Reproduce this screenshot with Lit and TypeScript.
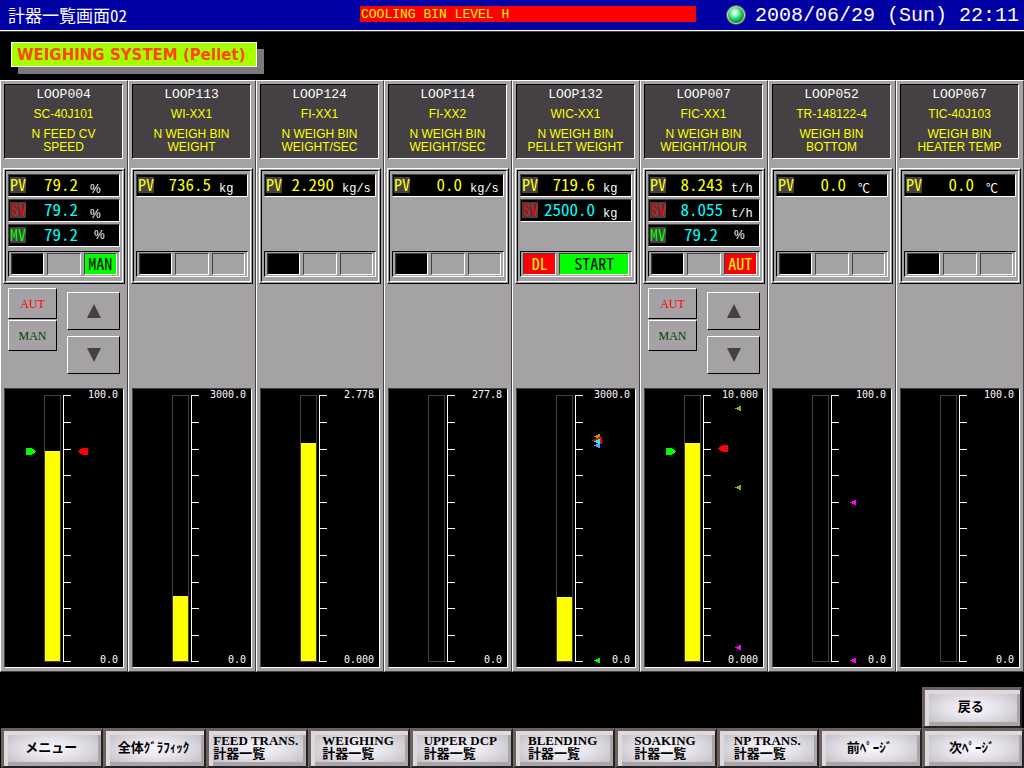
import { LitElement, html, css, svg, nothing } from "lit";
import { customElement, property } from "lit/decorators.js";
import { classMap } from "lit/directives/class-map.js";

interface Reading {
  tag: "PV" | "SV" | "MV";
  value: string;
  unit: string;
  shifted?: boolean;
  far?: boolean;
  level?: boolean;
}
interface Lamp {
  text?: string;
  look: "off" | "blank" | "green" | "red" | "start";
}
interface Marker {
  kind: "right" | "left" | "tri" | "small";
  x: number;
  y: number;
  color: string;
}
interface Loop {
  id: string;
  tag: string;
  name: string[];
  readings: Reading[];
  lamps?: Lamp[];
  controls?: boolean;
  max: string;
  min: string;
  fillTop?: number;
  markers?: Marker[];
}

const IDLE: Lamp[] = [{ look: "off" }, { look: "blank" }, { look: "blank" }];
const OLIVE = "#a5a200";

const LOOPS: Loop[] = [
  {
    id: "LOOP004", tag: "SC-40J101", name: ["N FEED CV", "SPEED"],
    readings: [
      { tag: "PV", value: "79.2", unit: "%", far: true },
      { tag: "SV", value: "79.2", unit: "%", far: true },
      { tag: "MV", value: "79.2", unit: "%", far: true, level: true },
    ],
    lamps: [{ look: "off" }, { look: "blank" }, { look: "green", text: "MAN" }],
    controls: true, max: "100.0", min: "0.0", fillTop: 62,
    markers: [
      { kind: "right", x: 21, y: 59, color: "#00ff00" },
      { kind: "left", x: 73, y: 59, color: "#ff0000" },
    ],
  },
  {
    id: "LOOP113", tag: "WI-XX1", name: ["N WEIGH BIN", "WEIGHT"],
    readings: [{ tag: "PV", value: "736.5", unit: "kg", shifted: true }],
    max: "3000.0", min: "0.0", fillTop: 207,
  },
  {
    id: "LOOP124", tag: "FI-XX1", name: ["N WEIGH BIN", "WEIGHT/SEC"],
    readings: [{ tag: "PV", value: "2.290", unit: "kg/s" }],
    max: "2.778", min: "0.000", fillTop: 54,
  },
  {
    id: "LOOP114", tag: "FI-XX2", name: ["N WEIGH BIN", "WEIGHT/SEC"],
    readings: [{ tag: "PV", value: "0.0", unit: "kg/s" }],
    max: "277.8", min: "0.0",
  },
  {
    id: "LOOP132", tag: "WIC-XX1", name: ["N WEIGH BIN", "PELLET WEIGHT"],
    readings: [
      { tag: "PV", value: "719.6", unit: "kg", shifted: true },
      { tag: "SV", value: "2500.0", unit: "kg", shifted: true },
    ],
    lamps: [{ look: "red", text: "DL" }, { look: "start", text: "START" }],
    max: "3000.0", min: "0.0", fillTop: 208,
    markers: [
      { kind: "small", x: 77, y: 45, color: OLIVE },
      { kind: "tri", x: 75, y: 48, color: "#ff0000" },
      { kind: "small", x: 77, y: 54, color: "#5aa2ff" },
      { kind: "small", x: 77, y: 50, color: "#00ffff" },
      { kind: "small", x: 77, y: 269, color: "#00ff00" },
    ],
  },
  {
    id: "LOOP007", tag: "FIC-XX1", name: ["N WEIGH BIN", "WEIGHT/HOUR"],
    readings: [
      { tag: "PV", value: "8.243", unit: "t/h", shifted: true },
      { tag: "SV", value: "8.055", unit: "t/h", shifted: true },
      { tag: "MV", value: "79.2", unit: "%", far: true, level: true },
    ],
    lamps: [{ look: "off" }, { look: "blank" }, { look: "red", text: "AUT" }],
    controls: true, max: "10.000", min: "0.000", fillTop: 54,
    markers: [
      { kind: "right", x: 21, y: 59, color: "#00ff00" },
      { kind: "left", x: 73, y: 56, color: "#ff0000" },
      { kind: "small", x: 90, y: 17, color: OLIVE },
      { kind: "small", x: 90, y: 96, color: OLIVE },
      { kind: "small", x: 90, y: 256, color: "#ff00ff" },
    ],
  },
  {
    id: "LOOP052", tag: "TR-148122-4", name: ["WEIGH BIN", "BOTTOM"],
    readings: [{ tag: "PV", value: "0.0", unit: "℃", far: true }],
    max: "100.0", min: "0.0",
    markers: [
      { kind: "small", x: 77, y: 111, color: "#ff00ff" },
      { kind: "small", x: 77, y: 269, color: "#ff00ff" },
    ],
  },
  {
    id: "LOOP067", tag: "TIC-40J103", name: ["WEIGH BIN", "HEATER TEMP"],
    readings: [{ tag: "PV", value: "0.0", unit: "℃", far: true }],
    max: "100.0", min: "0.0",
  },
];

const SCREENS: string[][] = [
  ["メニュー"],
  ["全体ｸﾞﾗﾌｨｯｸ"],
  ["FEED TRANS.", "計器一覧"],
  ["WEIGHING", "計器一覧"],
  ["UPPER DCP", "計器一覧"],
  ["BLENDING", "計器一覧"],
  ["SOAKING", "計器一覧"],
  ["NP TRANS.", "計器一覧"],
  ["前ﾍﾟｰｼﾞ"],
  ["次ﾍﾟｰｼﾞ"],
];

const MARKER_PATHS: Record<Marker["kind"], string> = {
  right: "M0 0h6v1h2v1h1v1h1v1h-1v1h-1v1h-2v1h-6z",
  left: "M10 0h-6v1h-2v1h-1v1h-1v1h1v1h1v1h2v1h6z",
  tri: "M10 0h-4v1h-2v1h-2v1h-2v1h2v1h2v1h2v1h4z",
  small: "M6 0h-2v1h-2v1h-2v1h2v1h2v1h2z",
};

@customElement("loop-gauge")
class LoopGauge extends LitElement {
  @property({ attribute: false }) loop!: Loop;

  static styles = css`
    :host {
      display: grid;
      background: #000;
      border: 1px solid;
      border-color: #444044 #fff #fff #444044;
    }
    .plot,
    .limits {
      grid-area: 1 / 1;
    }
    .plot {
      display: block;
      justify-self: center;
      width: 118px;
      height: 278px;
      shape-rendering: crispEdges;
    }
    .limits {
      display: flex;
      flex-direction: column;
      justify-content: space-between;
      align-items: flex-end;
      padding: 0 5px 2px 0;
      color: #fff;
      font: 10px/11px "DejaVu Sans Mono", monospace;
    }
  `;

  render() {
    const { max, min, fillTop, markers = [] } = this.loop;
    const ticks = Array.from({ length: 11 }, (_, i) => Math.ceil(6 + 26.6 * i));
    return html`
      <svg class="plot" viewBox="0 0 118 278" aria-hidden="true">
        <path d="M39 6h17v267h-17zM40 7v265h15v-265z" fill="#444044" fill-rule="evenodd" />
        ${fillTop === undefined
          ? nothing
          : svg`<rect x="40" y=${fillTop} width="15" height=${272 - fillTop} fill="#ffff00" />`}
        <rect x="58" y="6" width="1" height="267" fill="#fff" />
        ${ticks.map((y) => svg`<rect x="58" y=${y} width="8" height="1" fill="#fff" />`)}
        ${markers.map(
          (m) => svg`<path transform="translate(${m.x} ${m.y})" d=${MARKER_PATHS[m.kind]} fill=${m.color} />`
        )}
      </svg>
      <div class="limits"><span>${max}</span><span>${min}</span></div>
    `;
  }
}

@customElement("loop-panel")
class LoopPanel extends LitElement {
  @property({ attribute: false }) loop!: Loop;

  static styles = css`
    :host {
      display: block;
      min-width: 0;
      box-sizing: border-box;
      padding: 3px 2px;
      background: #a5a2a5;
      border: 1px solid;
      border-color: #fff #444044 #444044 #fff;
    }
    .info {
      box-sizing: border-box;
      height: 75px;
      margin: 0 2px 9px 1px;
      padding-top: 3px;
      background: #444044;
      border: 1px solid;
      border-color: #000 #fff #fff #000;
      color: #ff0;
      text-align: center;
      font: 12px/13px "Liberation Sans", Arial, sans-serif;
      white-space: nowrap;
    }
    .id {
      margin: 0;
      color: #fff;
      font: 13px/14px "Liberation Mono", monospace;
    }
    .tag {
      margin: 6px 0 7px;
    }
    .name {
      margin: 0;
    }
    .frame {
      padding: 1px;
      border: 1px solid;
      border-color: #fff #000 #000 #fff;
    }
    .inner {
      display: grid;
      grid-template-rows: 73px 26px;
      gap: 4px;
      padding: 3px 2px 4px;
      border: 1px solid;
      border-color: #000 #fff #fff #000;
    }
    .readings {
      display: flex;
      flex-direction: column;
      gap: 2px;
    }
    .reading {
      display: flex;
      align-items: flex-start;
      box-sizing: border-box;
      height: 23px;
      padding-left: 1px;
      background: #000;
      border: 1px solid;
      border-color: #444044 #fff #fff #444044;
      font-family: "Noto Sans CJK JP", sans-serif;
      font-feature-settings: "hwid";
      white-space: nowrap;
    }
    .kind {
      width: 16px;
      height: 16px;
      margin-top: 2px;
      background: #444044;
      font-size: 16px;
      line-height: 14px;
      color: #ff0;
    }
    .kind.sv {
      color: #f00;
    }
    .kind.mv {
      color: #0f0;
    }
    .value {
      width: 52px;
      text-align: right;
      color: #0ff;
      font-size: 17px;
      line-height: 18px;
    }
    .value.pv {
      color: #ff0;
    }
    .value.shifted {
      width: 57px;
    }
    .unit {
      padding: 8px 0 0 8px;
      color: #fff;
      font: 12px/12px "Liberation Mono", monospace;
    }
    .unit.far {
      padding-left: 12px;
      font-family: "Liberation Sans", "Noto Sans CJK JP", sans-serif;
    }
    .unit.level {
      padding-top: 4px;
      padding-left: 16px;
    }
    .lamps {
      display: grid;
      grid-template-columns: repeat(3, 1fr);
      gap: 3px;
      padding: 1px 2px;
      border: 1px solid;
      border-color: #000 #fff #fff #000;
      font: 16px/18px "Noto Sans CJK JP", sans-serif;
      font-feature-settings: "hwid";
      text-align: center;
    }
    .lamp {
      border: 1px solid;
      border-color: #444044 #fff #fff #444044;
      white-space: nowrap;
    }
    .off {
      background: #000;
    }
    .green,
    .start {
      background: #0f0;
      color: #000;
    }
    .start {
      grid-column: span 2;
    }
    .red {
      background: #f00;
      color: #ff0;
    }
    .controls {
      display: flex;
      justify-content: space-between;
      box-sizing: border-box;
      height: 104px;
      padding: 4px 5px;
    }
    .modes,
    .steps {
      display: flex;
      flex-direction: column;
    }
    .modes {
      gap: 1px;
    }
    .steps {
      gap: 6px;
      padding-top: 4px;
    }
    button {
      display: grid;
      place-items: center;
      box-sizing: border-box;
      padding: 0;
      background: #a5a2a5;
      border: 1px solid;
      border-color: #fff #000 #000 #fff;
      border-radius: 0;
      font: 12px/14px "Liberation Serif", serif;
    }
    .mode {
      width: 49px;
      height: 31px;
    }
    .aut {
      color: #f00;
    }
    .man {
      color: #004400;
    }
    .step {
      width: 53px;
      height: 38px;
    }
    .arrow {
      display: block;
      width: 14px;
      height: 14px;
      fill: #444044;
    }
    loop-gauge {
      margin: 0 1px;
    }
  `;

  render() {
    const l = this.loop;
    return html`
      <header class="info">
        <h2 class="id">${l.id}</h2>
        <p class="tag">${l.tag}</p>
        <p class="name">${l.name[0]}<br />${l.name[1]}</p>
      </header>
      <div class="frame">
        <div class="inner">
          <div class="readings">
            ${l.readings.map((r) => {
              const kind = r.tag.toLowerCase();
              return html`<div class="reading">
                <span class="kind ${kind}">${r.tag}</span>
                <output class=${classMap({ value: true, [kind]: true, shifted: !!r.shifted })}>${r.value}</output>
                <span class=${classMap({ unit: true, far: !!r.far, level: !!r.level })}>${r.unit}</span>
              </div>`;
            })}
          </div>
          <div class="lamps">
            ${(l.lamps ?? IDLE).map((p) => html`<div class="lamp ${p.look}">${p.text ?? nothing}</div>`)}
          </div>
        </div>
      </div>
      <div class="controls">
        ${l.controls
          ? html`
              <div class="modes">
                <button class="mode aut" type="button">AUT</button>
                <button class="mode man" type="button">MAN</button>
              </div>
              <div class="steps">
                <button class="step" type="button" aria-label="Raise">
                  <svg class="arrow" viewBox="0 0 14 14"><path d="M7 0L14 14H0z" /></svg>
                </button>
                <button class="step" type="button" aria-label="Lower">
                  <svg class="arrow" viewBox="0 0 14 14"><path d="M0 0H14L7 14z" /></svg>
                </button>
              </div>
            `
          : nothing}
      </div>
      <loop-gauge .loop=${l}></loop-gauge>
    `;
  }
}

@customElement("app-root")
class AppRoot extends LitElement {
  static styles = css`
    :host {
      display: flex;
      flex-direction: column;
      min-height: 100vh;
      background: #000;
      font-family: "Liberation Sans", "Noto Sans CJK JP", sans-serif;
    }
    .bar {
      display: grid;
      grid-template-columns: 360fr 336fr 328fr;
      align-items: center;
      height: 30px;
      background: #0000a5;
      border-bottom: 1px solid #fff;
      box-shadow: 0 1px #444044;
      color: #fff;
      white-space: nowrap;
    }
    .screen {
      margin: 0;
      padding-left: 8px;
      font: 17px/30px "Noto Sans CJK JP", sans-serif;
      font-feature-settings: "hwid";
    }
    .alarm {
      align-self: start;
      box-sizing: border-box;
      height: 16px;
      margin-top: 6px;
      padding-left: 1px;
      background: #f00;
      color: #ff0;
      font: 13px/18px "Liberation Mono", monospace;
    }
    .clock {
      display: flex;
      align-items: center;
      justify-content: flex-end;
      gap: 8px;
      padding-right: 5px;
      font: 20px/30px "Liberation Mono", monospace;
    }
    .time {
      padding-top: 2px;
      line-height: 28px;
    }
    .led {
      flex: none;
      width: 22px;
      height: 22px;
    }
    .caption {
      display: flex;
      box-sizing: border-box;
      height: 49px;
      padding: 11px 11px 0;
    }
    .badge {
      box-sizing: border-box;
      height: 25px;
      margin: 0;
      padding: 0 10px 0 5px;
      background: #a5ff00;
      border: 1px solid #fff;
      box-shadow: 7px 7px #7b797b;
      color: #ff4500;
      font: bold 15px/24px "DejaVu Sans", sans-serif;
      white-space: nowrap;
    }
    .loops {
      display: grid;
      grid-template-columns: repeat(8, minmax(0, 1fr));
    }
    .nav {
      display: grid;
      grid-template-columns: repeat(10, minmax(0, 1fr));
      grid-template-rows: 41px 40px;
      margin-top: auto;
      padding-left: 1px;
    }
    .key {
      display: grid;
      place-content: center;
      min-width: 0;
      padding: 0 3px 3px 0;
      border: solid;
      border-width: 3px 2px 2px 3px;
      border-color: #6b615f #292024 #292024 #6b615f;
      border-radius: 0;
      background: radial-gradient(ellipse at center, #fbf7ff 0%, #e6e2ea 40%, #c3c1c6 85%);
      box-shadow: inset 4px 4px #dcd9df, inset -3px -4px #a8a5ab;
      color: #000;
      text-align: left;
      font: bold 13px/13px "Liberation Serif", "Noto Sans CJK JP", serif;
      white-space: nowrap;
    }
    .back {
      grid-column: 10;
      margin-right: 2px;
    }
    .next {
      grid-row: 2;
    }
    .line {
      display: block;
    }
  `;

  render() {
    return html`
      <header class="bar">
        <h1 class="screen">計器一覧画面02</h1>
        <div class="alarm" role="alert">COOLING BIN LEVEL H</div>
        <div class="clock">
          <svg class="led" viewBox="0 0 22 22" aria-hidden="true">
            <defs>
              <radialGradient id="lens" cx="0.42" cy="0.36" r="0.62">
                <stop offset="0" stop-color="#ffffff" />
                <stop offset="0.3" stop-color="#a8f5c4" />
                <stop offset="0.65" stop-color="#22cf66" />
                <stop offset="1" stop-color="#008a3a" />
              </radialGradient>
            </defs>
            <circle cx="11" cy="11" r="10" fill="#5a5a5a" />
            <circle cx="11" cy="11" r="9" fill="#dedbd0" />
            <circle cx="11" cy="11" r="8" fill="url(#lens)" />
          </svg>
          <time class="time" datetime="2008-06-29T22:11">2008/06/29 (Sun) 22:11</time>
        </div>
      </header>
      <div class="caption"><h2 class="badge">WEIGHING SYSTEM (Pellet)</h2></div>
      <main class="loops">${LOOPS.map((l) => html`<loop-panel .loop=${l}></loop-panel>`)}</main>
      <nav class="nav">
        <button class="key back" type="button">戻る</button>
        ${SCREENS.map(
          (lines) => html`<button class="key next" type="button">
            <span>${lines.map((t) => html`<span class="line">${t}</span>`)}</span>
          </button>`
        )}
      </nav>
    `;
  }
}
